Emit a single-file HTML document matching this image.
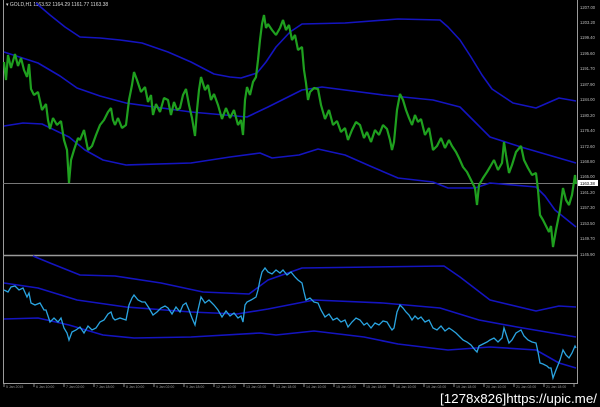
<!DOCTYPE html>
<html><head><meta charset="utf-8"><style>
html,body{margin:0;padding:0;background:#000;width:600px;height:407px;overflow:hidden}
svg{display:block}
text{font-family:"Liberation Sans",sans-serif}
</style></head><body>
<svg width="600" height="407" viewBox="0 0 600 407" xmlns="http://www.w3.org/2000/svg">
<rect width="600" height="407" fill="#000"/>
<line x1="3.5" y1="0" x2="3.5" y2="383" stroke="#9a9a9a" stroke-width="1"/>
<line x1="577.5" y1="0" x2="577.5" y2="383" stroke="#9a9a9a" stroke-width="1"/>
<line x1="3" y1="255.5" x2="578" y2="255.5" stroke="#9a9a9a" stroke-width="1.5"/>
<line x1="3" y1="383.5" x2="578" y2="383.5" stroke="#9a9a9a" stroke-width="1"/>
<line x1="3" y1="183.5" x2="577" y2="183.5" stroke="#777" stroke-width="1"/>
<text x="6" y="6" font-size="5" fill="#ddd">▾ GOLD,H1  1163.52 1164.29 1161.77 1163.38</text>
<g fill="none" stroke="#1414c0" stroke-width="1.6" stroke-linejoin="round">
<polyline points="36,3 50,15 65,27 80,37 100,38 120,40 142,43 168,52 191,62 214,74 230,77 241,78 257,73 266,62 276,47 290,32 302,24 345,23 398,19 440,20 448,27 460,40 471,57 482,75 492,89 513,103 536,108 559,98 576,101"/>
<polyline points="4,52 38,63 60,76 77,88 100,96 126,103 191,112 247,117 268,107 302,90 322,87 383,95 433,100 460,107 475,122 490,137 521,147 576,163"/>
<polyline points="4,126 23,123 42,124 69,137 85,150 103,160 126,165 191,163 230,157 260,153 272,158 299,155 318,149 345,155 370,166 398,178 433,182 448,188 475,188 490,183 536,187 545,196 555,210 576,227"/>
</g>
<polyline fill="none" stroke="#1fa01f" stroke-width="2.2" stroke-linejoin="bevel" points="4,62 6,80 8,55 11,68 15,54 18,66 21,58 24,70 27,77 29,64 31,89 34,95 38,92 42,110 46,104 48,120 50,129 53,118 57,125 61,121 64,140 67,150 69,183 71,160 74,150 78,138 80,140 84,130 88,150 92,146 96,135 100,125 104,120 108,112 111,108 113,120 115,125 118,118 122,128 126,125 129,100 132,85 134,72 137,80 141,92 145,87 148,102 151,95 153,115 156,104 160,112 164,98 168,100 171,115 174,102 177,110 180,108 183,95 186,89 189,105 192,118 195,136 197,110 199,90 201,77 205,90 208,85 211,100 214,94 218,105 222,119 226,108 230,118 234,110 238,125 241,120 243,135 245,100 247,87 250,95 253,82 256,77 258,60 260,40 262,24 264,15 266,28 268,24 272,30 276,35 280,28 283,20 286,30 289,25 292,40 295,35 298,50 302,47 304,70 306,83 308,100 310,92 314,88 318,89 321,105 325,119 329,110 333,125 337,121 341,132 345,128 348,140 352,130 356,122 360,125 364,138 367,132 371,142 375,130 379,135 383,125 387,129 390,140 392,150 394,142 397,110 400,94 403,100 406,110 409,118 412,125 415,115 418,122 421,119 425,135 429,128 433,150 437,146 441,138 445,148 449,140 452,146 456,152 459,158 463,167 467,172 471,180 475,188 477,205 479,185 483,178 487,172 490,167 494,160 498,170 502,163 504,142 506,155 509,173 512,165 516,152 521,146 524,160 528,168 532,175 536,173 538,190 540,215 543,220 547,228 549,232 551,226 553,247 556,230 560,210 563,188 566,200 569,205 572,195 575,175 576,184"/>
<g fill="none" stroke="#1414c0" stroke-width="1.6" stroke-linejoin="round">
<polyline points="33,256 50,263 80,275 115,276 161,283 203,292 249,294 268,280 302,268 444,266 460,277 490,300 536,311 559,306 576,307"/>
<polyline points="4,283 38,288 77,300 126,307 191,312 237,314 268,309 314,300 383,303 440,308 479,320 517,327 576,337"/>
<polyline points="4,319 38,318 69,325 103,335 134,338 191,337 260,333 276,335 314,331 364,337 398,344 448,350 490,347 536,350 559,363 576,368"/>
</g>
<polyline fill="none" stroke="#2aa4e0" stroke-width="1.3" points="4,290 8,292 11,287 15,286 19,290 23,288 27,297 29,293 31,303 35,305 40,303 44,310 46,310 48,316 50,322 54,318 58,322 61,318 64,328 67,333 69,340 72,332 76,330 80,327 84,333 88,326 92,330 96,328 100,322 104,320 108,314 111,312 113,318 115,320 120,318 126,320 129,305 132,298 134,295 138,300 142,302 145,302 149,308 153,315 157,312 161,308 165,306 168,308 172,314 176,307 180,312 183,305 186,303 189,310 192,318 195,325 198,310 201,297 205,303 209,300 214,305 218,310 222,317 226,311 230,316 234,313 238,318 241,316 243,322 245,305 247,302 251,300 256,297 258,290 260,280 262,272 265,268 268,272 272,274 276,270 280,273 283,270 287,275 291,272 295,277 298,280 302,283 304,292 306,300 310,298 314,302 318,303 321,310 325,317 329,314 333,320 337,318 341,322 345,320 348,327 352,322 356,318 360,320 364,325 367,323 371,328 375,323 379,325 383,321 387,322 390,327 392,330 394,328 397,312 400,305 403,308 406,312 409,315 412,320 415,316 418,319 421,317 425,322 429,320 433,328 437,330 441,326 445,331 449,328 452,330 456,333 459,336 463,340 467,342 471,345 475,350 477,352 479,346 483,344 487,342 490,340 494,338 498,342 502,338 504,328 506,334 509,343 512,340 516,333 521,330 524,336 528,340 532,342 536,343 538,352 540,363 543,364 547,366 549,368 551,368 553,378 556,370 560,360 563,350 566,355 569,358 572,353 575,346 576,348"/>
<g font-size="4.2" fill="#bbb">
<text x="580" y="9">1207.00</text>
<text x="580" y="24">1203.20</text>
<text x="580" y="39">1199.40</text>
<text x="580" y="55">1195.60</text>
<text x="580" y="70">1191.70</text>
<text x="580" y="86">1187.90</text>
<text x="580" y="101">1184.00</text>
<text x="580" y="117">1180.20</text>
<text x="580" y="132">1176.40</text>
<text x="580" y="148">1172.60</text>
<text x="580" y="163">1168.80</text>
<text x="580" y="178">1165.00</text>
<text x="580" y="194">1161.20</text>
<text x="580" y="209">1157.30</text>
<text x="580" y="225">1153.50</text>
<text x="580" y="240">1149.70</text>
<text x="580" y="256">1145.90</text>
</g>
<rect x="578" y="180" width="20" height="6" fill="#fff"/>
<text x="580" y="185" font-size="4.2" fill="#000">1163.38</text>
<g stroke="#888" stroke-width="1">
<line x1="4" y1="384" x2="4" y2="387"/><line x1="34" y1="384" x2="34" y2="387"/><line x1="64" y1="384" x2="64" y2="387"/><line x1="94" y1="384" x2="94" y2="387"/><line x1="124" y1="384" x2="124" y2="387"/><line x1="154" y1="384" x2="154" y2="387"/><line x1="184" y1="384" x2="184" y2="387"/><line x1="214" y1="384" x2="214" y2="387"/><line x1="244" y1="384" x2="244" y2="387"/><line x1="274" y1="384" x2="274" y2="387"/><line x1="304" y1="384" x2="304" y2="387"/><line x1="334" y1="384" x2="334" y2="387"/><line x1="364" y1="384" x2="364" y2="387"/><line x1="394" y1="384" x2="394" y2="387"/><line x1="424" y1="384" x2="424" y2="387"/><line x1="454" y1="384" x2="454" y2="387"/><line x1="484" y1="384" x2="484" y2="387"/><line x1="514" y1="384" x2="514" y2="387"/><line x1="544" y1="384" x2="544" y2="387"/><line x1="574" y1="384" x2="574" y2="387"/>
</g>
<g font-size="3.5" fill="#999">
<text x="6" y="388">5 Jan 2015</text><text x="36" y="388">6 Jan 10:00</text><text x="66" y="388">7 Jan 02:00</text><text x="96" y="388">7 Jan 18:00</text><text x="126" y="388">8 Jan 10:00</text><text x="156" y="388">9 Jan 02:00</text><text x="186" y="388">9 Jan 18:00</text><text x="216" y="388">12 Jan 10:00</text><text x="246" y="388">13 Jan 02:00</text><text x="276" y="388">13 Jan 18:00</text><text x="306" y="388">14 Jan 10:00</text><text x="336" y="388">15 Jan 02:00</text><text x="366" y="388">15 Jan 18:00</text><text x="396" y="388">16 Jan 10:00</text><text x="426" y="388">19 Jan 02:00</text><text x="456" y="388">19 Jan 18:00</text><text x="486" y="388">20 Jan 10:00</text><text x="516" y="388">21 Jan 02:00</text><text x="546" y="388">21 Jan 18:00</text>
</g>
<text x="440" y="403" font-size="13" fill="#fff" textLength="157" lengthAdjust="spacingAndGlyphs">[1278x826]https://upic.me/</text>
</svg>
</body></html>
